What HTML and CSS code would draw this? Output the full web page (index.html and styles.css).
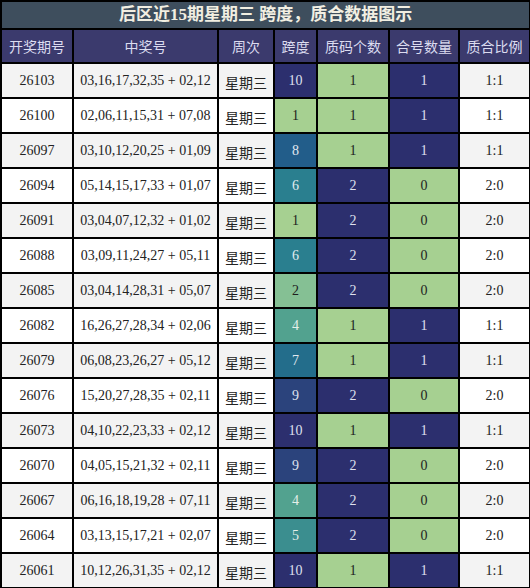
FILE: index.html
```html
<!DOCTYPE html>
<html lang="zh">
<head>
    <meta charset="UTF-8">
    <title>后区近15期星期三 跨度，质合数据图示</title>
    <link rel="stylesheet" href="styles.css">
</head>
<body>
    <table class="chart">
        <colgroup>
            <col class="c-issue"><col class="c-nums"><col class="c-week"><col class="c-span">
            <col class="c-prime"><col class="c-comp"><col class="c-ratio">
        </colgroup>
        <tr class="title-row"><th colspan="7">后区近15期星期三 跨度，质合数据图示</th></tr>
        <tr class="head-row">
            <th>开奖期号</th><th>中奖号</th><th>周次</th><th>跨度</th><th>质码个数</th><th>合号数量</th><th>质合比例</th>
        </tr>
        <tr class="odd"><td>26103</td><td>03,16,17,32,35 + 02,12</td><td class="cn">星期三</td><td class="s10">10</td><td class="g">1</td><td class="n">1</td><td>1:1</td></tr>
        <tr><td>26100</td><td>02,06,11,15,31 + 07,08</td><td class="cn">星期三</td><td class="s1">1</td><td class="g">1</td><td class="n">1</td><td>1:1</td></tr>
        <tr class="odd"><td>26097</td><td>03,10,12,20,25 + 01,09</td><td class="cn">星期三</td><td class="s8">8</td><td class="g">1</td><td class="n">1</td><td>1:1</td></tr>
        <tr><td>26094</td><td>05,14,15,17,33 + 01,07</td><td class="cn">星期三</td><td class="s6">6</td><td class="n">2</td><td class="g">0</td><td>2:0</td></tr>
        <tr class="odd"><td>26091</td><td>03,04,07,12,32 + 01,02</td><td class="cn">星期三</td><td class="s1">1</td><td class="n">2</td><td class="g">0</td><td>2:0</td></tr>
        <tr><td>26088</td><td>03,09,11,24,27 + 05,11</td><td class="cn">星期三</td><td class="s6">6</td><td class="n">2</td><td class="g">0</td><td>2:0</td></tr>
        <tr class="odd"><td>26085</td><td>03,04,14,28,31 + 05,07</td><td class="cn">星期三</td><td class="s2">2</td><td class="n">2</td><td class="g">0</td><td>2:0</td></tr>
        <tr><td>26082</td><td>16,26,27,28,34 + 02,06</td><td class="cn">星期三</td><td class="s4">4</td><td class="g">1</td><td class="n">1</td><td>1:1</td></tr>
        <tr class="odd"><td>26079</td><td>06,08,23,26,27 + 05,12</td><td class="cn">星期三</td><td class="s7">7</td><td class="g">1</td><td class="n">1</td><td>1:1</td></tr>
        <tr><td>26076</td><td>15,20,27,28,35 + 02,11</td><td class="cn">星期三</td><td class="s9">9</td><td class="n">2</td><td class="g">0</td><td>2:0</td></tr>
        <tr class="odd"><td>26073</td><td>04,10,22,23,33 + 02,12</td><td class="cn">星期三</td><td class="s10">10</td><td class="g">1</td><td class="n">1</td><td>1:1</td></tr>
        <tr><td>26070</td><td>04,05,15,21,32 + 02,11</td><td class="cn">星期三</td><td class="s9">9</td><td class="n">2</td><td class="g">0</td><td>2:0</td></tr>
        <tr class="odd"><td>26067</td><td>06,16,18,19,28 + 07,11</td><td class="cn">星期三</td><td class="s4">4</td><td class="n">2</td><td class="g">0</td><td>2:0</td></tr>
        <tr><td>26064</td><td>03,13,15,17,21 + 02,07</td><td class="cn">星期三</td><td class="s5">5</td><td class="n">2</td><td class="g">0</td><td>2:0</td></tr>
        <tr class="odd"><td>26061</td><td>10,12,26,31,35 + 02,12</td><td class="cn">星期三</td><td class="s10">10</td><td class="g">1</td><td class="n">1</td><td>1:1</td></tr>
    </table>
</body>
</html>
```

FILE: styles.css
```css
body {
    margin: 0;
    background: #ffffff;
    font-family: "Liberation Serif", "Noto Sans CJK SC", serif;
}
.chart {
    border-collapse: collapse;
    table-layout: fixed;
    width: 529px;
    font-size: 14px;
    line-height: 16px;
    color: #222222;
}
.c-issue { width: 72px; }
.c-nums { width: 145px; }
.c-week { width: 56px; }
.c-span { width: 43px; }
.c-prime { width: 72px; }
.c-comp { width: 70px; }
.c-ratio { width: 71px; }

.chart tr { height: 35px; }
.chart tr.title-row { height: 28px; }
.chart tr.head-row { height: 34px; }

.chart th,
.chart td {
    border: 2px solid #000000;
    text-align: center;
    padding: 0;
    white-space: nowrap;
}
.chart td { background: #ffffff; }
.chart tr.odd td { background: #f3f3f3; }

.title-row th {
    background: #3e4e5d;
    color: #f2efe2;
    font-size: 17px;
    line-height: 20px;
    font-weight: bold;
    font-family: "Liberation Serif", "Noto Sans CJK SC", serif;
}
.head-row th {
    background: #3b3a6d;
    color: #dcdcf0;
    font-weight: normal;
    font-size: 14px;
    font-family: "Noto Sans CJK SC", sans-serif;
}
.chart td.cn {
    font-family: "Noto Sans CJK SC", sans-serif;
    padding-top: 3px;
}

.chart tr td.g { background: #a6d091; color: #1e1e1e; }
.chart tr td.n { background: #2c2f6e; color: #dfe0ee; }

.chart tr td.s1 { background: #a6d091; color: #1e1e1e; }
.chart tr td.s2 { background: #85c094; color: #1e1e1e; }
.chart tr td.s4 { background: #52a28f; color: #e4efe9; }
.chart tr td.s5 { background: #3b8e8f; color: #e4efe9; }
.chart tr td.s6 { background: #2a7f8f; color: #e1ecf0; }
.chart tr td.s7 { background: #236d8b; color: #e1e8f0; }
.chart tr td.s8 { background: #225d8a; color: #e1e8f0; }
.chart tr td.s9 { background: #2b437c; color: #dfe2ee; }
.chart tr td.s10 { background: #2c2f6e; color: #dfe0ee; }
```
